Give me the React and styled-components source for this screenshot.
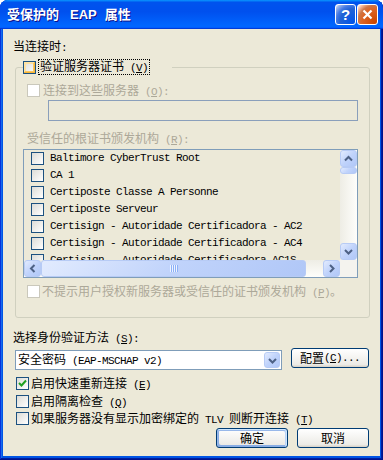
import React from "react";
import styled, { createGlobalStyle } from "styled-components";

const certs = [
  "Baltimore CyberTrust Root",
  "CA 1",
  "Certiposte Classe A Personne",
  "Certiposte Serveur",
  "Certisign - Autoridade Certificadora - AC2",
  "Certisign - Autoridade Certificadora - AC4",
  "Certisign - Autoridade Certificadora AC1S",
];

const GlobalStyle = createGlobalStyle`
  html, body {
    margin: 0;
    padding: 0;
    background: #fff;
  }
  body {
    font-family: "Noto Sans CJK SC", "Liberation Sans", sans-serif;
    font-size: 12px;
  }
`;

const Window = styled.div`
  width: 383px;
  height: 460px;
  box-sizing: border-box;
  display: flex;
  flex-direction: column;
  background: #0055e5;
  border-radius: 8px 8px 0 0;
  overflow: hidden;
  box-shadow: inset -1px -1px #00138c, inset 1px 1px #0831d9,
    inset -2px -2px #001ea0, inset 2px 2px #166aee;
`;

const TitleBar = styled.div`
  height: 29px;
  flex: none;
  display: flex;
  align-items: center;
  justify-content: space-between;
  padding: 0 5px 0 7px;
  background: linear-gradient(
    180deg,
    #0997ff,
    #0053ee 8%,
    #0050ee 40%,
    #06f 88%,
    #06f 93%,
    #005bff 95%,
    #003dd7 96%,
    #003dd7
  );
`;

const Title = styled.div`
  color: #fff;
  font: bold 13px/16px "Noto Sans CJK SC", sans-serif;
  text-shadow: 1px 1px #0f1089;
  white-space: nowrap;
`;

const TitleLatin = styled.span`
  font-family: "Liberation Sans", sans-serif;
  margin: 0 8px 0 11px;
`;

const Controls = styled.div`
  display: flex;
  gap: 1px;
`;

const CtlButton = styled.div`
  width: 21px;
  height: 21px;
  box-sizing: border-box;
  border: 1px solid #fff;
  border-radius: 3px;
  display: flex;
  align-items: center;
  justify-content: center;
  color: #fff;
  font: bold 15px/1 "Liberation Sans", sans-serif;
  background: ${(p) =>
    p.$kind === "close"
      ? "radial-gradient(circle at 90% 90%, #cc4600 0%, #dc6527 55%, #cd7546 70%, #ffccb2 90%, #fff 100%)"
      : "radial-gradient(circle at 90% 90%, #0054e9 0%, #2263d5 55%, #4479e4 70%, #a3bbec 90%, #fff 100%)"};
`;

const Client = styled.div`
  flex: 1;
  margin: 0 3px 4px 3px;
  background: #ece9d8;
  padding: 10px 0 0 10px;
  display: flex;
  flex-direction: column;
  align-items: flex-start;
`;

const Label = styled.div`
  line-height: 14px;
  height: 14px;
  white-space: nowrap;
  color: ${(p) => (p.$disabled ? "#aca899" : "#000")};
  margin-left: ${(p) => p.$indent || 0}px;
  margin-top: ${(p) => p.$top || 0}px;
`;

const Latin = styled.span`
  font-family: "Liberation Mono", monospace;
  font-size: 11px;
  letter-spacing: -0.6px;
`;

const Acc = ({ k, tail = "" }) => (
  <Latin>
    {" "}(<u>{k}</u>){tail}
  </Latin>
);

const Box = styled.span`
  flex: none;
  width: 13px;
  height: 13px;
  box-sizing: border-box;
  display: inline-flex;
  align-items: center;
  justify-content: center;
  border: 1px solid ${(p) => (p.$disabled ? "#cac8bb" : "#1c5180")};
  background: ${(p) =>
    p.$disabled ? "#fff" : "linear-gradient(135deg, #dcdcd7, #fff)"};
  box-shadow: ${(p) =>
    p.$hot
      ? "inset -1px -1px #f8b636, inset 1px 1px #fee3a3, inset -2px -2px #fbc761, inset 2px 2px #fee0a0"
      : "none"};
`;

const Check = ({ disabled, hot, checked }) => (
  <Box $disabled={disabled} $hot={hot}>
    {checked && (
      <svg width="9" height="9" viewBox="0 0 9 9">
        <polyline
          points="1,4 3.5,6.5 8,1.5"
          fill="none"
          stroke="#21a121"
          strokeWidth="2"
        />
      </svg>
    )}
  </Box>
);

const Row = styled.div`
  display: flex;
  align-items: center;
  height: 13px;
  gap: ${(p) => p.$gap ?? 3}px;
  margin-left: ${(p) => p.$indent || 0}px;
  margin-top: ${(p) => p.$top || 0}px;
  white-space: nowrap;
  line-height: 14px;
  color: ${(p) => (p.$disabled ? "#aca899" : "#000")};
`;

const Group = styled.fieldset`
  margin: 7px 0 0 2px;
  width: 355px;
  box-sizing: border-box;
  min-width: 0;
  border: 1px solid #d0d0bf;
  border-radius: 3px;
  padding: 10px 0 19px 7px;
  display: flex;
  flex-direction: column;
  align-items: flex-start;
`;

const Legend = styled.legend`
  padding: 0 22px 0 0;
  margin: 0;
  height: 14px;
  display: flex;
  align-items: center;
  gap: 2px;
`;

const Focus = styled.span`
  border: 1px dotted #000;
  line-height: 12px;
  padding: 0 1px;
  white-space: nowrap;
`;

const TextField = styled.div`
  width: 310px;
  height: 21px;
  box-sizing: border-box;
  margin: 3px 0 0 25px;
  border: 1px solid #8a9fbb;
  background: #ece9d8;
`;

const ListBox = styled.div`
  width: 335px;
  height: 129px;
  box-sizing: border-box;
  margin-top: 4px;
  border: 1px solid #7f9db9;
  background: #ece9d8;
  display: grid;
  grid-template-columns: 1fr 17px;
  grid-template-rows: 110px 17px;
`;

const Items = styled.div`
  overflow: hidden;
`;

const ItemRow = styled.div`
  height: 17px;
  display: flex;
  align-items: center;
  gap: 6px;
  padding-left: 7px;
  white-space: nowrap;
  line-height: 17px;
`;

const ItemText = styled.span`
  font-family: "Liberation Mono", monospace;
  font-size: 11px;
  letter-spacing: -0.6px;
  color: #000;
`;

const Track = styled.div`
  display: flex;
  flex-direction: ${(p) => (p.$vertical ? "column" : "row")};
  background: linear-gradient(
    ${(p) => (p.$vertical ? "90deg" : "180deg")},
    #eeede5,
    #fefefb
  );
`;

const SBtn = styled.div`
  flex: none;
  width: ${(p) => p.$w || 17}px;
  height: ${(p) => p.$h || 17}px;
  box-sizing: border-box;
  border: 1px solid #b7cbf5;
  border-radius: 3px;
  display: flex;
  align-items: center;
  justify-content: center;
  background: linear-gradient(135deg, #e2ebfe, #c0d3fb 50%, #b0c7f7);
`;

const Spacer = styled.div`
  flex: 1;
`;

const Grip = styled.div`
  width: 8px;
  height: 7px;
  background: repeating-linear-gradient(
    90deg,
    #eef4fe 0 1px,
    #8cb0f8 1px 2px
  );
`;

const Corner = styled.div`
  background: #f4f3ee;
`;

const Chevron = ({ dir }) => {
  const pts = {
    up: "1,5.5 4.5,2 8,5.5",
    down: "1,2 4.5,5.5 8,2",
    left: "5.5,1 2,4.5 5.5,8",
    right: "2,1 5.5,4.5 2,8",
  }[dir];
  const horiz = dir === "left" || dir === "right";
  return (
    <svg
      width={horiz ? 7 : 9}
      height={horiz ? 9 : 7}
      viewBox={horiz ? "0 0 7 9" : "0 0 9 7"}
    >
      <polyline points={pts} fill="none" stroke="#4d6185" strokeWidth="2" />
    </svg>
  );
};

const ComboRow = styled.div`
  display: flex;
  align-items: flex-start;
  gap: 9px;
  margin: 4px 0 0 2px;
`;

const Combo = styled.div`
  width: 267px;
  height: 20px;
  margin-top: 2px;
  box-sizing: border-box;
  border: 1px solid #7f9db9;
  background: #fff;
  padding: 1px;
  display: flex;
  align-items: center;
`;

const ComboText = styled.span`
  flex: 1;
  padding-left: 1px;
  line-height: 16px;
  white-space: nowrap;
`;

const PushButton = styled.div`
  width: ${(p) => p.$w}px;
  height: 20px;
  box-sizing: border-box;
  border: 1px solid #003c74;
  border-radius: 3px;
  display: flex;
  align-items: center;
  justify-content: center;
  line-height: 14px;
  white-space: nowrap;
  background: linear-gradient(180deg, #fff, #ecebe6 86%, #d6d0c5);
  box-shadow: ${(p) =>
    p.$default
      ? "inset -1px 1px #cee7ff, inset 1px 2px #98b8ea, inset -2px 2px #bcd4f6, inset 1px -1px #89ade4, inset 2px -2px #89ade4"
      : "none"};
`;

const ButtonBar = styled.div`
  align-self: stretch;
  display: flex;
  justify-content: flex-end;
  gap: 9px;
  margin: 3px 11px 0 0;
`;

export default function App() {
  return (
    <>
      <GlobalStyle />
      <Window>
        <TitleBar>
          <Title>
            受保护的<TitleLatin>EAP</TitleLatin>属性
          </Title>
          <Controls>
            <CtlButton $kind="help">?</CtlButton>
            <CtlButton $kind="close">
              <svg width="11" height="11" viewBox="0 0 11 11">
                <path
                  d="M1.5 1.5 L9.5 9.5 M9.5 1.5 L1.5 9.5"
                  stroke="#fff"
                  strokeWidth="2.2"
                />
              </svg>
            </CtlButton>
          </Controls>
        </TitleBar>
        <Client>
          <Label>
            当连接时<Latin>:</Latin>
          </Label>
          <Group>
            <Legend>
              <Check hot />
              <Focus>
                验证服务器证书
                <Acc k="V" />
              </Focus>
            </Legend>
            <Row $disabled $indent={4}>
              <Check disabled />
              <span>
                连接到这些服务器
                <Acc k="O" tail=":" />
              </span>
            </Row>
            <TextField />
            <Label $disabled $indent={4} $top={10}>
              受信任的根证书颁发机构
              <Acc k="R" tail=":" />
            </Label>
            <ListBox>
              <Items>
                {certs.map((c) => (
                  <ItemRow key={c}>
                    <Check />
                    <ItemText>{c}</ItemText>
                  </ItemRow>
                ))}
              </Items>
              <Track $vertical>
                <SBtn>
                  <Chevron dir="up" />
                </SBtn>
                <SBtn $h={7} />
                <Spacer />
                <SBtn>
                  <Chevron dir="down" />
                </SBtn>
              </Track>
              <Track>
                <SBtn>
                  <Chevron dir="left" />
                </SBtn>
                <SBtn $w={265}>
                  <Grip />
                </SBtn>
                <Spacer />
                <SBtn>
                  <Chevron dir="right" />
                </SBtn>
              </Track>
              <Corner />
            </ListBox>
            <Row $disabled $indent={4} $top={7} $gap={2}>
              <Check disabled />
              <span>
                不提示用户授权新服务器或受信任的证书颁发机构
                <Acc k="P" />。
              </span>
            </Row>
          </Group>
          <Label $top={12}>
            选择身份验证方法
            <Acc k="S" tail=":" />
          </Label>
          <ComboRow>
            <Combo>
              <ComboText>
                安全密码<Latin> (EAP-MSCHAP v2)</Latin>
              </ComboText>
              <SBtn $w={16} $h={16}>
                <Chevron dir="down" />
              </SBtn>
            </Combo>
            <PushButton $w={78}>
              配置
              <Acc k="C" tail="..." />
            </PushButton>
          </ComboRow>
          <Row $indent={3} $top={7} $gap={2}>
            <Check checked />
            <span>
              启用快速重新连接
              <Acc k="E" />
            </span>
          </Row>
          <Row $indent={3} $top={5} $gap={2}>
            <Check />
            <span>
              启用隔离检查
              <Acc k="Q" />
            </span>
          </Row>
          <Row $indent={3} $top={4} $gap={2}>
            <Check />
            <span>
              如果服务器没有显示加密绑定的<Latin> TLV </Latin>则断开连接
              <Acc k="T" />
            </span>
          </Row>
          <ButtonBar>
            <PushButton $w={72} $default>
              确定
            </PushButton>
            <PushButton $w={72}>取消</PushButton>
          </ButtonBar>
        </Client>
      </Window>
    </>
  );
}
